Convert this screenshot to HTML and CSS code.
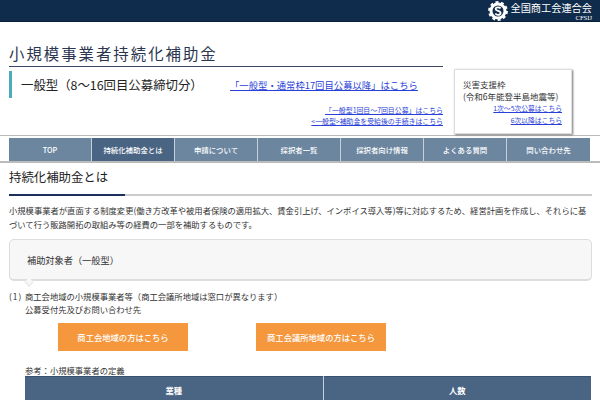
FILE: index.html
```html
<!DOCTYPE html>
<html lang="ja">
<head>
<meta charset="utf-8">
<title>小規模事業者持続化補助金</title>
<link rel="stylesheet" href="styles.css">
</head>
<body>
<header class="topbar">
  <div class="org">
    <svg class="gear" viewBox="0 0 20 20" width="20" height="20" aria-hidden="true">
      <circle cx="10" cy="10" r="7" fill="none" stroke="#fff" stroke-width="3"/>
      <circle cx="10" cy="10" r="8.6" fill="none" stroke="#fff" stroke-width="2.6" stroke-dasharray="2.9 2.5"/>
      <path d="M12.6 7.4c-.6-.8-1.6-1.1-2.6-1.1-1.3 0-2.4.7-2.4 1.8 0 2.3 5 1.3 5 3.8 0 1.2-1.2 1.9-2.6 1.9-1.1 0-2.100-.4-2.700-1.300" fill="none" stroke="#fff" stroke-width="1.8"/>
    </svg>
    <div class="org-text">
      <div class="org-name">全国商工会連合会</div>
      <div class="org-sub">CFSIJ</div>
    </div>
  </div>
</header>

<div class="head">
  <div class="head-main">
    <h1 class="site-title">小規模事業者持続化補助金</h1>
    <div class="type-row">
      <div class="type-name">一般型（8〜16回目公募締切分）</div>
      <a class="type-link" href="#">「一般型・通常枠17回目公募以降」はこちら</a>
    </div>
    <div class="small-links">
      <a href="#">「一般型1回目〜7回目公募」はこちら</a>
      <a href="#">&lt;一般型&gt;補助金を受給後の手続きはこちら</a>
    </div>
  </div>
  <aside class="disaster">
    <div>災害支援枠</div>
    <div>(令和6年能登半島地震等)</div>
    <a href="#">1次〜5次公募はこちら</a>
    <a href="#">6次以降はこちら</a>
  </aside>
</div>

<nav class="nav">
  <a href="#">TOP</a>
  <a href="#" class="active">持続化補助金とは</a>
  <a href="#">申請について</a>
  <a href="#">採択者一覧</a>
  <a href="#">採択者向け情報</a>
  <a href="#">よくある質問</a>
  <a href="#">問い合わせ先</a>
</nav>

<main class="main">
  <h2 class="page-title">持続化補助金とは</h2>
  <p class="lead">小規模事業者が直面する制度変更(働き方改革や被用者保険の適用拡大、賃金引上げ、インボイス導入等)等に対応するため、経営計画を作成し、それらに基づいて行う販路開拓の取組み等の経費の一部を補助するものです。</p>
  <div class="bubble">補助対象者（一般型）</div>
  <div class="item">
    <span class="num">(1)</span>
    <div>
      <div>商工会地域の小規模事業者等（商工会議所地域は窓口が異なります）</div>
      <div>公募受付先及びお問い合わせ先</div>
    </div>
  </div>
  <div class="btns">
    <a href="#" class="btn">商工会地域の方はこちら</a>
    <a href="#" class="btn">商工会議所地域の方はこちら</a>
  </div>
  <div class="ref">参考：小規模事業者の定義</div>
  <table class="tbl">
    <thead><tr><th class="c1">業種</th><th>人数</th></tr></thead>
  </table>
</main>
</body>
</html>
```

FILE: styles.css
```css
* { box-sizing: border-box; }
html, body { margin: 0; padding: 0; }
body {
  width: 600px;
  height: 400px;
  overflow: hidden;
  background: #fff;
  color: #2a2a2a;
  font-family: "Noto Sans CJK JP", "Liberation Sans", sans-serif;
  font-size: 8.3px;
}
a { color: #2a3fd8; }

.topbar {
  height: 22px;
  background: #0f2c4c;
  border-bottom: 1px solid #0a1f38;
  display: flex;
  justify-content: flex-end;
  padding-right: 8px;
}
.org { display: flex; gap: 3px; align-items: center; height: 21px; }
.gear { display: block; }
.org-text { color: #fff; text-align: right; }
.org-name { font-size: 10.2px; line-height: 11px; height: 11px; margin-top: 1px; }
.org-sub { font-size: 6.6px; line-height: 7px; margin-top: 1px; font-family: "Liberation Serif", serif; }

.head {
  display: flex;
  padding: 0 0 0 9px;
  height: 113px;
}
.head-main { width: 434px; }
.site-title {
  margin: 0;
  height: 45px;
  padding-top: 20px;
  font-size: 15.4px;
  line-height: 22px;
  font-weight: 400;
  letter-spacing: 2px;
  color: #2b3550;
  border-bottom: 1px solid #3d4663;
}
.type-row {
  margin-top: 4px;
  height: 27px;
  display: flex;
  align-items: center;
  border-left: 3px solid #4bacb8;
  padding-left: 9px;
}
.type-name { font-size: 12.4px; width: 209px; flex: none; color: #222; white-space: nowrap; }
.type-link { font-size: 9.35px; }
.small-links {
  margin-top: 7px;
  display: flex;
  flex-direction: column;
  align-items: flex-end;
  font-size: 6.9px;
  line-height: 11px;
}
.disaster {
  margin: 47px 0 0 11px;
  width: 118px;
  height: 65px;
  padding: 8px 9px 0 8px;
  background: #fff;
  border: 1px solid #ddd;
  box-shadow: 1px 1px 2px #777;
  font-size: 8.5px;
  line-height: 12px;
  display: flex;
  flex-direction: column;
  color: #333;
}
.disaster a { align-self: flex-end; font-size: 6.8px; line-height: 12px; }

.nav {
  display: grid;
  grid-template-columns: repeat(7, 83px);
  height: 28px;
  padding-left: 9px;
  border-top: 1px solid #bbb;
  border-bottom: 2px solid #bbb;
  padding-top: 2px;
}
.nav a {
  background: #6c86a0;
  color: #fff;
  font-size: 7.4px;
  font-weight: 500;
  text-decoration: none;
  display: flex;
  align-items: center;
  justify-content: center;
  border-right: 1px solid #c5d0da;
}
.nav a:last-child { border-right: 0; }
.nav a.active { background: #4a6583; }

.main { padding: 0 8px 0 9px; }
.page-title {
  margin: 0;
  height: 33px;
  padding-top: 3px;
  font-size: 12.4px;
  line-height: 22px;
  font-weight: 400;
  color: #222;
  border-bottom: 2px solid #ccc;
  position: relative;
}
.page-title::after {
  content: "";
  position: absolute;
  left: 0;
  bottom: -2px;
  width: 116px;
  height: 2px;
  background: #1c2f5c;
}
.lead {
  margin: 7px 0 0;
  line-height: 14px;
  color: #333;
}
.bubble {
  position: relative;
  margin-top: 8px;
  height: 42px;
  padding-left: 17px;
  display: flex;
  align-items: center;
  font-size: 9.2px;
  background: #f7f7f7;
  border: 1px solid #ddd;
  border-bottom-width: 2px;
  border-radius: 5px;
  color: #333;
}
.bubble::after {
  content: "";
  position: absolute;
  left: 15px;
  bottom: -7px;
  width: 7px;
  height: 7px;
  background: #f7f7f7;
  border-right: 1px solid #ddd;
  border-bottom: 1px solid #ddd;
  transform: rotate(45deg) scale(.8);
}
.item {
  margin-top: 9px;
  display: flex;
  line-height: 13px;
  color: #333;
}
.num { width: 16px; letter-spacing: 1px; }
.btns {
  margin: 7px 0 0 49px;
  display: flex;
  gap: 68px;
}
.btn {
  width: 130px;
  height: 28px;
  background: #f5973d;
  color: #fff;
  font-weight: 500;
  text-decoration: none;
  display: flex;
  align-items: center;
  justify-content: center;
}
.ref { margin: 13px 0 0 16px; line-height: 12px; color: #333; }
.tbl {
  margin: 0 0 0 16px;
  width: 566px;
  border-collapse: collapse;
  table-layout: fixed;
}
.tbl th {
  background: #4a6583;
  color: #fff;
  font-size: 8.3px;
  font-weight: 700;
  height: 26px;
  border-top: 1px solid #3a5270;
  padding: 0;
}
.tbl th.c1 { width: 298px; border-right: 1px solid #c5d0da; }
```
